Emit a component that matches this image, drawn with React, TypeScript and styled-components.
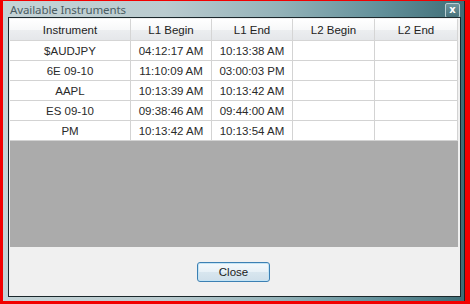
import React from 'react';
import styled, { createGlobalStyle } from 'styled-components';

const GlobalStyle = createGlobalStyle`
  html, body {
    margin: 0;
    padding: 0;
    background: #f20000;
  }
  body {
    width: 470px;
    height: 304px;
    overflow: hidden;
    font-family: "Liberation Sans", Arial, sans-serif;
  }
`;

const Window = styled.div`
  margin: 1px 0 0 3px;
  width: 462px;
  height: 300px;
  box-sizing: border-box;
  display: flex;
  flex-direction: column;
  padding: 0 3px 4px 5px;
  border-right: 1px solid #18262a;
  background: linear-gradient(90deg, #c4d3d6 0%, #bacbcf 35%, #93b2b8 60%, #62909a 82%, #3f6d76 100%);
`;

const TitleBar = styled.div`
  height: 16px;
  display: flex;
  align-items: center;
  justify-content: space-between;
  padding-left: 2px;
`;

const Title = styled.span`
  font-family: "Noto Sans", "Open Sans", sans-serif;
  font-size: 11.5px;
  color: #4a5c62;
  letter-spacing: -0.1px;
`;

const CloseX = styled.div`
  width: 13px;
  height: 13px;
  margin-right: 1px;
  margin-top: 2px;
  border: 1px solid #b9ced3;
  border-radius: 2px;
  background: linear-gradient(180deg, #6f959d, #46727b);
  color: #fff;
  font-size: 10px;
  font-weight: bold;
  line-height: 12px;
  text-align: center;
  font-family: "DejaVu Sans", sans-serif;
`;

const Client = styled.div`
  flex: 1;
  display: flex;
  flex-direction: column;
  border: 1px solid #1b282c;
  background: #f0f0f0;
  padding: 1px 2px 0 1px;
`;

const Grid = styled.div`
  height: 228px;
  background: #ababab;
  display: grid;
  grid-template-columns: 121px 81px 81px 82px 83px;
  grid-auto-rows: 20px;
  grid-template-rows: 22px;
  align-content: start;
`;

const HeadCell = styled.div`
  display: flex;
  align-items: center;
  justify-content: center;
  font-size: 11.5px;
  color: #222;
  background: linear-gradient(180deg, #ffffff 0%, #f7f8f9 50%, #eceef0 51%, #e5e7ea 100%);
  border-right: 1px solid #d5d5d5;
  border-bottom: 1px solid #d5d5d5;
  box-sizing: border-box;
`;

const Cell = styled.div`
  display: flex;
  align-items: center;
  justify-content: center;
  font-size: 11.5px;
  color: #2a2a2a;
  background: #fff;
  border-right: 1px solid #d3d3d3;
  border-bottom: 1px solid #d3d3d3;
  box-sizing: border-box;
`;

const Footer = styled.div`
  flex: 1;
  display: flex;
  align-items: center;
  justify-content: center;
  padding-left: 1px;
`;

const Button = styled.button`
  width: 73px;
  height: 20px;
  margin-left: -2px;
  font-family: inherit;
  font-size: 11.5px;
  color: #1a1a1a;
  border: 1px solid #3c80b3;
  border-radius: 3px;
  background: linear-gradient(180deg, #f4f9fc 0%, #e8f1f7 48%, #d8e6ef 52%, #cfdfea 100%);
  box-shadow: inset 0 0 0 1px #c4e4f5;
  padding: 0;
`;

const headers = ['Instrument', 'L1 Begin', 'L1 End', 'L2 Begin', 'L2 End'];

const rows = [
  ['$AUDJPY', '04:12:17 AM', '10:13:38 AM', '', ''],
  ['6E 09-10', '11:10:09 AM', '03:00:03 PM', '', ''],
  ['AAPL', '10:13:39 AM', '10:13:42 AM', '', ''],
  ['ES 09-10', '09:38:46 AM', '09:44:00 AM', '', ''],
  ['PM', '10:13:42 AM', '10:13:54 AM', '', ''],
];

const App = () => {
  return (
    <>
      <GlobalStyle />
      <Window>
        <TitleBar>
          <Title>Available Instruments</Title>
          <CloseX>x</CloseX>
        </TitleBar>
        <Client>
          <Grid>
            {headers.map((h) => (
              <HeadCell key={h}>{h}</HeadCell>
            ))}
            {rows.map((r, i) =>
              r.map((c, j) => <Cell key={`${i}-${j}`}>{c}</Cell>)
            )}
          </Grid>
          <Footer>
            <Button>Close</Button>
          </Footer>
        </Client>
      </Window>
    </>
  );
};

export default App;
